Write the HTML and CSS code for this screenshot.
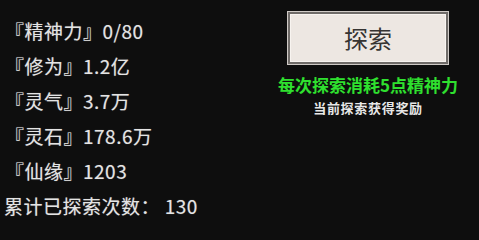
FILE: index.html
```html
<!DOCTYPE html>
<html lang="zh-CN">
<head>
<meta charset="utf-8">
<link rel="stylesheet" href="styles.css">
</head>
<body>
<div class="page">
  <div class="stats">
    <div class="row">『精神力』0/80</div>
    <div class="row">『修为』1.2亿</div>
    <div class="row">『灵气』3.7万</div>
    <div class="row">『灵石』178.6万</div>
    <div class="row">『仙缘』1203</div>
    <div class="row total">累计已探索次数： 130</div>
  </div>
  <div class="explore">
    <button class="btn">探索</button>
    <div class="cost">每次探索消耗5点精神力</div>
    <div class="reward">当前探索获得奖励</div>
  </div>
</div>
</body>
</html>
```
FILE: styles.css
```css
html, body {
  margin: 0;
  padding: 0;
  background: #0e0e0e;
  width: 479px;
  height: 231px;
  overflow: hidden;
  font-family: "Noto Sans CJK SC", "Noto Sans", sans-serif;
}
.page {
  display: flex;
  flex-direction: row;
}
.stats {
  width: 283px;
  padding: 13px 0 0 5px;
  display: flex;
  flex-direction: column;
}
.row {
  height: 35px;
  line-height: 35px;
  font-size: 19px;
  letter-spacing: 0.5px;
  color: #e4e4e4;
  white-space: nowrap;
  text-shadow: 0 0 1px rgba(255,255,255,0.4);
}
.total {
  margin-left: -1px;
}
.explore {
  width: 160px;
  display: flex;
  flex-direction: column;
  align-items: center;
  padding-top: 12px;
}
.btn {
  width: 160px;
  height: 52px;
  margin: 0;
  padding: 0;
  box-sizing: border-box;
  background: #ede7e2;
  border: 2px solid #6f6b68;
  box-shadow: 0 0 0 1px #cfcac6, inset 0 0 0 1px #f8f4f0;
  font-family: "Noto Sans CJK SC", sans-serif;
  font-size: 24px;
  color: #363432;
  line-height: 1;
}
.cost {
  margin-top: 11px;
  height: 20px;
  line-height: 20px;
  font-size: 17px;
  font-weight: bold;
  color: #2fe02f;
  white-space: nowrap;
}
.reward {
  margin-top: 5px;
  height: 16px;
  line-height: 16px;
  font-size: 13px;
  font-weight: bold;
  letter-spacing: 0.7px;
  color: #e8e8e8;
  white-space: nowrap;
}
```
